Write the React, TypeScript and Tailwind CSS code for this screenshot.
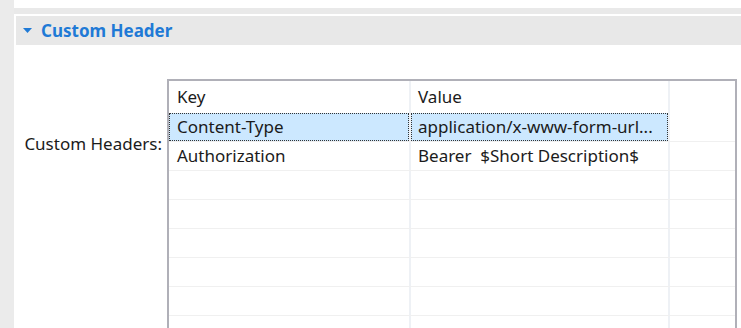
import React from "react";

const rows = [
  { k: "Content-Type", v: "application/x-www-form-url...", sel: true },
  { k: "Authorization", v: "Bearer  $Short Description$", sel: false },
  { k: "", v: "", sel: false },
  { k: "", v: "", sel: false },
  { k: "", v: "", sel: false },
  { k: "", v: "", sel: false },
  { k: "", v: "", sel: false },
  { k: "", v: "", sel: false },
];

export default function App() {
  return (
    <div
      className="w-[741px] h-[328px] overflow-hidden bg-white flex text-[#1b1b1b] text-[17px]"
      style={{ fontFamily: '"Noto Sans", "Open Sans", sans-serif' }}
    >
      <div className="w-[14px] shrink-0 bg-[#ebebeb]" />
      <div className="flex-1 flex flex-col min-w-0">
        <div className="h-[8px] shrink-0" />
        <div className="h-[6px] shrink-0 bg-[#e9e9e9]" />
        <div className="h-[2px] shrink-0" />
        <div className="h-[29px] shrink-0 ml-[2px] bg-[#e8e8e8] flex items-center">
          <svg width="9" height="5" viewBox="0 0 9 5" className="ml-[7px] mr-[9px]">
            <path d="M0 0 L9 0 L4.5 5 Z" fill="#1f7ad6" />
          </svg>
          <span className="font-bold text-[#1f7ad6] text-[17px] leading-none">Custom Header</span>
        </div>
        <div className="flex pt-[34px] flex-1 min-h-0">
          <div className="w-[153px] shrink-0 flex justify-end pr-[5px] pt-[51px]">
            <span className="leading-[28px]">Custom Headers:</span>
          </div>
          <div className="w-[570px] shrink-0 border-2 border-b-0 border-[#b0b0b8] flex flex-col">
            <div className="flex h-[32px] shrink-0">
              <div className="w-[240px] pl-[8px] flex items-center">Key</div>
              <div className="w-[2px] bg-[#eef1f5]" />
              <div className="w-[257px] pl-[7px] flex items-center">Value</div>
              <div className="w-[2px] bg-[#eef1f5]" />
              <div className="flex-1" />
            </div>
            {rows.map((r, i) => (
              <div key={i} className="flex h-[29px] shrink-0 border-b border-[#f0f0f0]">
                <div
                  className={
                    r.sel
                      ? "w-[240px] pl-[7px] flex items-center bg-[#cce8ff] border border-dotted border-[#333]"
                      : "w-[240px] pl-[8px] flex items-center"
                  }
                >
                  {r.k}
                </div>
                <div className="w-[2px] bg-[#eef1f5]" />
                <div
                  className={
                    r.sel
                      ? "w-[257px] pl-[6px] flex items-center bg-[#cce8ff] border border-dotted border-[#333] whitespace-pre"
                      : "w-[257px] pl-[7px] flex items-center whitespace-pre"
                  }
                >
                  {r.v}
                </div>
                <div className="w-[2px] bg-[#eef1f5]" />
                <div className="flex-1" />
              </div>
            ))}
          </div>
        </div>
      </div>
    </div>
  );
}
